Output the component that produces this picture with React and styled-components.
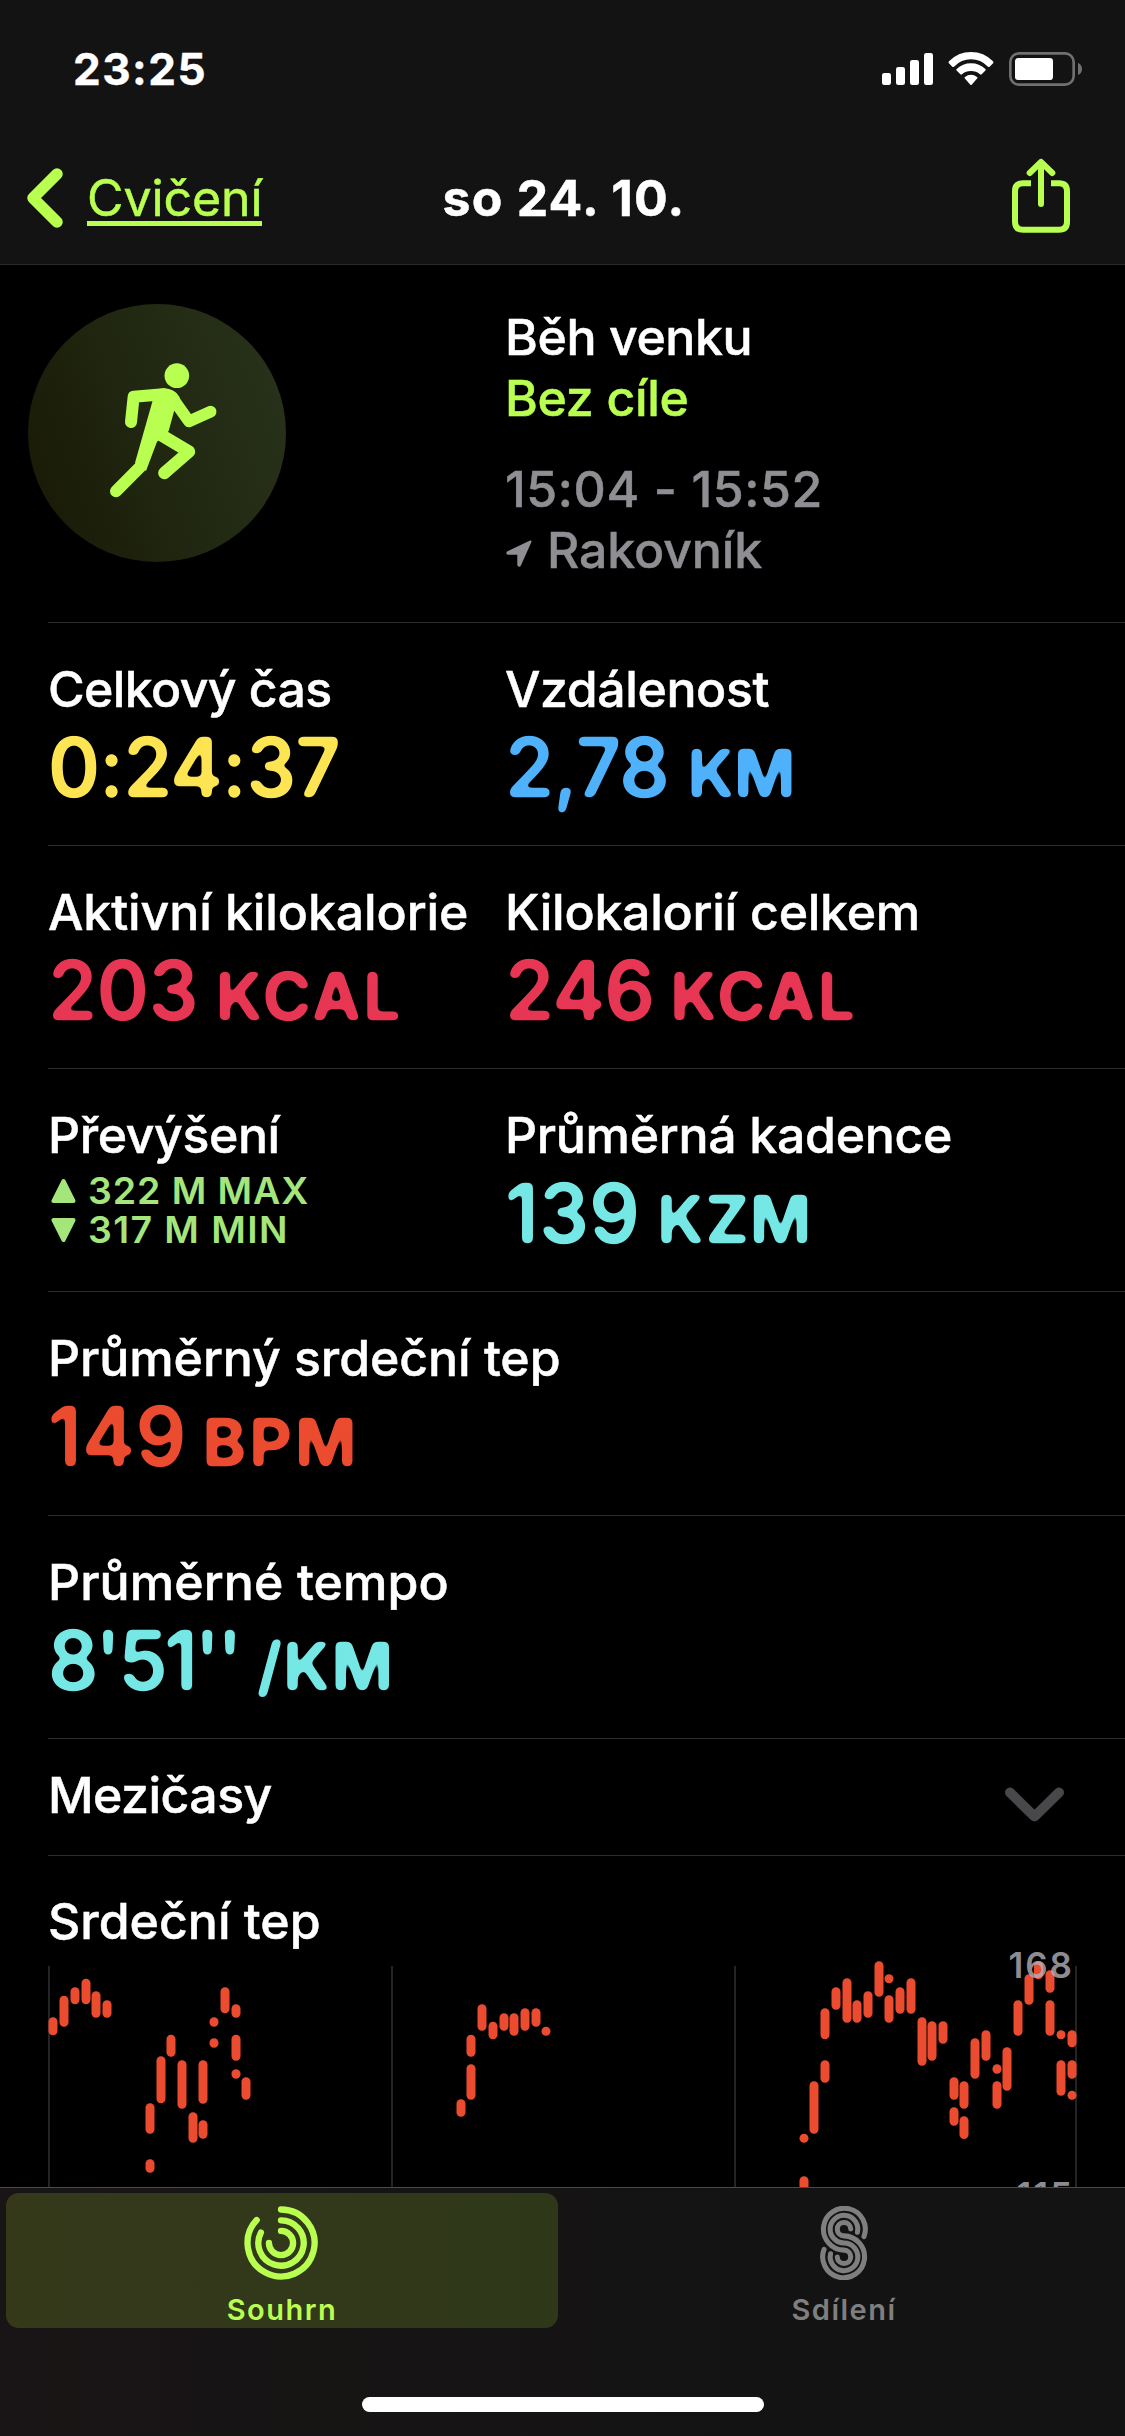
import React from "react";
import styled, { createGlobalStyle } from "styled-components";

const LIME = "#b9ff50";
const GRAY = "#8e8e93";
const RED = "#eb4b2f";

const GlobalStyle = createGlobalStyle`
  * { box-sizing: border-box; }
  body {
    margin: 0;
    background: #000;
    color: #fff;
    font-family: Inter, "Noto Sans", sans-serif;
  }
`;

const Screen = styled.div`
  width: 1125px;
  height: 2436px;
  display: flex;
  flex-direction: column;
  overflow: hidden;
  background: #000;
`;

const Header = styled.header`
  flex: none;
  height: 265px;
  background: #131313;
  border-bottom: 1px solid #2a2a2a;
`;

const StatusBar = styled.div`
  height: 132px;
  display: flex;
  justify-content: space-between;
  align-items: flex-start;
  padding: 44px 43px 0 73px;
`;

const Clock = styled.span`
  font-size: 44px;
  line-height: 50px;
  font-weight: 700;
  letter-spacing: 1.5px;
  -webkit-text-stroke: 0.4px currentColor;
`;

const StatusIcons = styled.div`
  display: flex;
  align-items: center;
  height: 50px;
  gap: 15px;
`;

const NavBar = styled.nav`
  height: 132px;
  display: grid;
  grid-template-columns: 1fr auto 1fr;
  align-items: start;
  padding: 23px 26px 0;
`;

const BackLink = styled.a`
  display: flex;
  align-items: flex-start;
  gap: 23px;
  color: ${LIME};
  font-size: 50px;
  font-weight: 400;
  letter-spacing: -0.1px;
  -webkit-text-stroke: 0.5px currentColor;

  svg { margin-top: 12px; }
`;

const BackText = styled.span`
  margin-top: 4px;
  height: 67px;
  line-height: 79px;
  border-bottom: 5px solid ${LIME};
`;

const NavTitle = styled.h1`
  margin: 0;
  padding-left: 3px;
  font-size: 50px;
  line-height: 86px;
  font-weight: 700;
  letter-spacing: 1.2px;
  -webkit-text-stroke: 0.5px currentColor;
`;

const ShareButton = styled.button`
  justify-self: end;
  border: 0;
  padding: 0;
  margin: 3px 29px 0 0;
  background: none;
  display: flex;
`;

const Content = styled.main`
  flex: 1;
  min-height: 0;
  overflow: hidden;
`;

const Summary = styled.section`
  height: 358px;
  display: grid;
  grid-template-columns: 457px 1fr;
  margin-left: 48px;
  border-bottom: 1px solid #2c2c2e;
`;

const WorkoutBadge = styled.div`
  width: 258px;
  height: 258px;
  margin: 39px 0 0 -20px;
  border-radius: 50%;
  background: linear-gradient(70deg, #1a1c08 12%, #222913 55%, #283119 92%);
`;

const WorkoutInfo = styled.div`
  padding-top: 42px;
  display: flex;
  flex-direction: column;
  font-size: 50px;
  line-height: 61px;
  font-weight: 500;
  -webkit-text-stroke: 0.5px currentColor;
`;

const InfoLine = styled.span`
  color: ${(p) => p.$color || "#fff"};
  -webkit-text-stroke-color: ${(p) => p.$color || "#fff"};
  letter-spacing: ${(p) => p.$track || 0}px;
  margin-top: ${(p) => p.$gap || 0}px;
  display: flex;

  svg { margin: 20px 15px 0 1px; }
`;

const Row = styled.section`
  height: ${(p) => p.$height || 223}px;
  display: grid;
  grid-template-columns: 457px 1fr;
  margin-left: 48px;
  padding-top: 36px;
  border-bottom: 1px solid #2c2c2e;
`;

const Cell = styled.div`
  display: flex;
  flex-direction: column;
  white-space: nowrap;
`;

const Label = styled.span`
  font-size: 50px;
  line-height: 60px;
  font-weight: 500;
  letter-spacing: ${(p) => p.$track || 0}px;
  -webkit-text-stroke: 0.5px currentColor;
`;

const Value = styled.div`
  margin-top: 6px;
  line-height: 84px;
  font-weight: 600;
  color: ${(p) => p.$color};
  filter: url(#rounded);
`;

const Amount = styled.span`
  display: inline-block;
  font-size: 83px;
  letter-spacing: ${(p) => p.$track || 0}px;
  transform: scaleX(0.95);
  transform-origin: left;
`;

const Unit = styled.span`
  font-size: 66px;
  line-height: 66px;
  font-weight: 700;
  letter-spacing: ${(p) => p.$track || 0}px;
  margin-left: ${(p) => p.$gap}px;
`;

const ElevationList = styled.div`
  padding: 6px 0 0 3px;
`;

const Elevation = styled.div`
  display: flex;
  align-items: center;
  gap: 12px;
  font-size: 37.5px;
  line-height: 39px;
  font-weight: 600;
  letter-spacing: ${(p) => p.$track}px;
  color: #a4e67c;
`;

const SplitsRow = styled.section`
  height: 117px;
  display: flex;
  justify-content: space-between;
  align-items: flex-start;
  margin-left: 48px;
  padding: 26px 60px 0 0;
  border-bottom: 1px solid #2c2c2e;

  svg { margin-top: 21px; }
`;

const HeartSection = styled.section`
  padding-top: 35px;
`;

const HeartTitle = styled.h2`
  margin: 0 0 0 48px;
  font-size: 50px;
  line-height: 60px;
  font-weight: 500;
  -webkit-text-stroke: 0.5px currentColor;
`;

const ChartSvg = styled.svg`
  display: block;
  margin-top: -2px;

  text {
    font: 600 35px Inter, sans-serif;
    letter-spacing: 2px;
    text-anchor: end;
  }
`;

const TabBar = styled.footer`
  flex: none;
  height: 249px;
  border-top: 1px solid #4b4a4b;
  background: linear-gradient(90deg, #191516 0, #161414 45%, #131313 65%);
  display: flex;
  flex-direction: column;
  align-items: center;
`;

const Tabs = styled.div`
  width: 1125px;
  display: grid;
  grid-template-columns: 552px 552px;
  gap: 10px;
  padding: 5px 6px 0;
`;

const Tab = styled.div`
  height: 135px;
  padding-top: 13px;
  display: flex;
  flex-direction: column;
  align-items: center;
  border-radius: 13px;
  background: ${(p) => (p.$active ? "linear-gradient(90deg, #35391a, #32381a 60%, #2e3818)" : "none")};
  color: ${(p) => (p.$active ? LIME : "#7f7f7f")};
  font-size: 29px;
  line-height: 36px;
  font-weight: 600;
  letter-spacing: 1.5px;

  svg { margin-bottom: 12px; }
`;

const HomeIndicator = styled.div`
  width: 402px;
  height: 15px;
  margin-top: 69px;
  border-radius: 8px;
  background: #fff;
`;

const FilterDefs = styled.svg`
  display: block;
  width: 0;
  height: 0;
`;

const RoundedFilter = () => (
  <FilterDefs aria-hidden="true">
    <filter id="rounded" x="-2%" y="-10%" width="104%" height="120%" colorInterpolationFilters="sRGB">
      <feGaussianBlur stdDeviation="2.4" />
      <feComponentTransfer>
        <feFuncA type="linear" slope="7" intercept="-2.7" />
      </feComponentTransfer>
    </filter>
  </FilterDefs>
);

const SignalIcon = () => (
  <svg width="51" height="34" viewBox="36 36 153 102" fill="#fff">
    <rect x="36" y="99" width="27" height="36" rx="7" />
    <rect x="78" y="81" width="27" height="54" rx="7" />
    <rect x="120" y="60" width="27" height="75" rx="7" />
    <rect x="162" y="39" width="27" height="96" rx="7" />
  </svg>
);

const WifiIcon = () => (
  <svg width="46" height="34" viewBox="234 36 138 102" fill="#fff">
    <path d="M236 69Q235 66 237 64Q264 36 303 36T369 64Q371 66 370 69L359 80Q357 82 354 80Q332 58 303 58T252 80Q249 82 247 80Z" />
    <path d="M259 91Q258 89 260 87Q278 70 303 70T346 87Q348 89 347 91L335 103Q333 105 330 103Q319 93 303 93T276 103Q273 105 271 103Z" />
    <path d="M284 115Q282 113 285 111Q293 104 303 104T321 111Q324 113 322 115L305 134Q303 136 301 134Z" />
  </svg>
);

const BatteryIcon = () => (
  <svg width="73" height="34" viewBox="417 36 219 102">
    <rect x="421" y="40" width="190" height="94" rx="26" fill="none" stroke="#707070" strokeWidth="8" />
    <rect x="435" y="54" width="114" height="66" rx="10" fill="#fff" />
    <path d="M624 68Q636 74 636 87T624 105Z" fill="#707070" />
  </svg>
);

const BackIcon = () => (
  <svg width="38" height="62" viewBox="0 0 38 62" fill="none" stroke={LIME} strokeWidth="11.5" strokeLinecap="round" strokeLinejoin="round">
    <path d="M31 7L7 31L31 55" />
  </svg>
);

const ShareIcon = () => (
  <svg width="58" height="75" viewBox="426 352 174 225" fill="none" stroke={LIME} strokeWidth="18">
    <path d="M483 428H459Q435 428 435 452V543Q435 567 459 567H567Q591 567 591 543V452Q591 428 567 428H543" />
    <path d="M513 490V366M479 397L513 364L547 397" strokeLinecap="round" strokeLinejoin="round" />
  </svg>
);

const RunnerIcon = () => (
  <svg width="258" height="258" viewBox="24 24 774 774" fill={LIME} stroke={LIME} strokeLinecap="round" strokeLinejoin="round">
    <circle cx="470.5" cy="239" r="37" stroke="none" />
    <path d="M333 378L341 302L430 295" fill="none" strokeWidth="36" />
    <path d="M455 303L507 376L572 347" fill="none" strokeWidth="35" />
    <path d="M397 317L400 281L434 277Q462 278 478 302L486 340L463 343L446 405L411 437L378 525L345 500Z" stroke="none" />
    <path d="M361 512L288 586" fill="none" strokeWidth="36" />
    <path d="M425 418L507 467L433 531" fill="none" strokeWidth="37" />
  </svg>
);

const LocationIcon = () => (
  <svg width="26" height="27" viewBox="0 0 26 27" fill={GRAY} stroke={GRAY} strokeWidth="2" strokeLinejoin="round">
    <path d="M24.5 1.5L1.5 12.3Q1 13.5 2 13.7H12.3V25Q13.3 26.5 14 25Z" />
  </svg>
);

const TriangleIcon = ({ down }) => (
  <svg width="25" height="26" viewBox="0 0 25 26" fill="#a4e67c" stroke="#a4e67c" strokeWidth="4" strokeLinejoin="round">
    <path d={down ? "M2.5 3H22.5L12.5 23Z" : "M2.5 23H22.5L12.5 3Z"} />
  </svg>
);

const ChevronDownIcon = () => (
  <svg width="61" height="38" viewBox="0 0 61 38" fill="none" stroke="#48484a" strokeWidth="10" strokeLinecap="round" strokeLinejoin="round">
    <path d="M6 6.5L30.5 30.5L55 6.5" />
  </svg>
);

const RingsIcon = () => (
  <svg width="76" height="76" viewBox="-37 -38 76 76" fill="none" stroke={LIME} strokeWidth="6.5" strokeLinecap="round">
    <path d="M0 -34.4A34.4 34.4 0 1 1 -25 -23.6" />
    <path d="M0 -23.3A23.3 23.3 0 1 1 -20.7 -10.7" />
    <path d="M0 -12.4A12.4 12.4 0 1 1 -12.4 0" />
  </svg>
);

const SharingIcon = () => (
  <svg width="50" height="76" viewBox="-25 -38 50 76" fill="none" stroke="currentColor" strokeWidth="5.2" strokeLinecap="round">
    <path d="M20.5 -6.6A21.5 21.5 0 1 0 0 7.3A6.9 6.9 0 1 1 -6.9 14.5" />
    <path d="M13.8 -11A14.2 14.2 0 1 0 0 0A14.2 14.2 0 1 1 -13.8 11" />
    <path d="M6.9 -14.5A6.9 6.9 0 1 0 0 -7.3A21.5 21.5 0 1 1 -20.5 6.6" />
  </svg>
);

// Heart-rate samples: [x centre, top, bottom]
const BEATS = [
  [53, 87.3, 105.3], [64, 65.7, 96.7], [75, 57.3, 74.3], [86, 48.7, 74.3], [96, 61.3, 87.7], [107, 70.3, 87.7],
  [150, 173.3, 203.7], [150, 229.3, 242.7], [161, 126.3, 173.3], [171, 104.7, 126.7], [182, 130.3, 178.7],
  [193, 182.3, 212.7], [203, 130.3, 173.7], [203, 190.3, 208.7], [214, 87.3, 96.7], [214, 108.3, 117.7],
  [225, 57.3, 83.3], [236, 74.3, 87.7], [236, 104.7, 130.7], [236, 139.3, 148.7], [246, 147.3, 169.7],
  [461, 169.3, 186.7], [471, 104.7, 126.7], [471, 134.3, 169.7], [482, 74.3, 100.7], [493, 91.7, 109.3],
  [504, 83.3, 100.7], [514, 83.3, 105.7], [525, 78.3, 100.7], [536, 78.3, 96.7], [546, 96.7, 105.7],
  [804, 203.7, 212.7], [804, 246.3, 276], [814, 151.3, 203.7], [825, 78.3, 109.3], [825, 130.3, 152.7],
  [836, 57.3, 79.7], [847, 48.3, 92.7], [857, 70.3, 92.7], [868, 61.3, 87.7], [879, 31.3, 66.7],
  [889, 44.3, 53.3], [889, 65.3, 92.7], [900, 57.3, 83.7], [911, 48.3, 83.7], [922, 87.3, 135.7],
  [932, 91.3, 130.7], [943, 91.3, 113.7], [954, 147.3, 169.7], [954, 177.3, 195.7], [964, 151.3, 178.7],
  [964, 186.3, 209], [975, 108.3, 148.7], [986, 100.3, 130.7], [997, 134.3, 143.7], [997, 151.3, 178.7],
  [1007, 117.3, 160.7], [1018, 70.3, 105.7], [1029, 44.3, 74.7], [1038.5, 31.3, 49.3], [1050, 40.3, 62.7],
  [1050, 70.3, 105.7], [1061, 100.3, 109.3], [1061, 130.3, 165.7], [1072, 100.3, 117.3], [1072, 130.3, 148.7],
  [1072, 160.7, 169.7],
];

const HeartChart = () => (
  <ChartSvg width="1125" height="240" viewBox="0 19 1125 240">
    {[49, 392, 735, 1076].map((x) => (
      <rect key={x} x={x - 0.75} y="36" width="1.5" height="240" fill="#303032" />
    ))}
    {BEATS.map(([x, top, bottom], i) => (
      <rect key={i} x={x - 4.5} y={top} width="9" height={bottom - top} rx="4.5" fill={RED} />
    ))}
    <text x="1074" y="48" fill="#b4b4ba" fillOpacity="0.8">168</text>
    <text x="1074" y="278" fill="#b4b4ba" fillOpacity="0.8">115</text>
  </ChartSvg>
);

const Metric = ({ label, track, amount, amountTrack, unit, unitTrack, gap = 7, color }) => (
  <Cell>
    <Label $track={track}>{label}</Label>
    <Value $color={color}>
      <Amount $track={amountTrack}>{amount}</Amount>
      {unit && <Unit $track={unitTrack} $gap={gap}>{unit}</Unit>}
    </Value>
  </Cell>
);

export default function App() {
  return (
    <Screen>
      <GlobalStyle />
      <Header>
        <StatusBar>
          <Clock>23:25</Clock>
          <StatusIcons>
            <SignalIcon />
            <WifiIcon />
            <BatteryIcon />
          </StatusIcons>
        </StatusBar>
        <NavBar>
          <BackLink>
            <BackIcon />
            <BackText>Cvičení</BackText>
          </BackLink>
          <NavTitle>so 24. 10.</NavTitle>
          <ShareButton aria-label="Sdílet">
            <ShareIcon />
          </ShareButton>
        </NavBar>
      </Header>

      <Content>
        <Summary>
          <WorkoutBadge>
            <RunnerIcon />
          </WorkoutBadge>
          <WorkoutInfo>
            <InfoLine $track={-0.4}>Běh venku</InfoLine>
            <InfoLine $track={-0.3} $color={LIME}>Bez cíle</InfoLine>
            <InfoLine $track={0.6} $color={GRAY} $gap={30}>15:04 - 15:52</InfoLine>
            <InfoLine $track={-0.1} $color={GRAY}>
              <LocationIcon />
              Rakovník
            </InfoLine>
          </WorkoutInfo>
        </Summary>

        <Row>
          <Metric label="Celkový čas" track={-0.6} amount="0:24:37" amountTrack={-1} color="#fde452" />
          <Metric label="Vzdálenost" track={-0.4} amount="2,78" amountTrack={-0.9} unit="KM" unitTrack={-1} gap={10} color="#4fb1fb" />
        </Row>
        <Row>
          <Metric label="Aktivní kilokalorie" track={-0.1} amount="203" amountTrack={-0.5} unit="KCAL" unitTrack={2.1} gap={10} color="#e73653" />
          <Metric label="Kilokalorií celkem" track={-0.25} amount="246" amountTrack={-0.5} unit="KCAL" unitTrack={2.1} gap={8} color="#e73653" />
        </Row>
        <Row>
          <Cell>
            <Label $track={-0.4}>Převýšení</Label>
            <ElevationList>
              <Elevation $track={0.9}>
                <TriangleIcon />
                322 M MAX
              </Elevation>
              <Elevation $track={1.4}>
                <TriangleIcon down />
                317 M MIN
              </Elevation>
            </ElevationList>
          </Cell>
          <Metric label="Průměrná kadence" track={-0.3} amount="139" amountTrack={0.4} unit="KZM" unitTrack={0.6} gap={10} color="#75e7e5" />
        </Row>
        <Row $height={224}>
          <Metric label="Průměrný srdeční tep" track={-0.07} amount="149" amountTrack={1} unit="BPM" unitTrack={3} gap={8} color={RED} />
        </Row>
        <Row>
          <Metric label="Průměrné tempo" track={0.1} amount="8'51''" amountTrack={-3.3} unit="/KM" unitTrack={0.8} gap={7} color="#75e7e5" />
        </Row>
        <SplitsRow>
          <Label $track={-0.55}>Mezičasy</Label>
          <ChevronDownIcon />
        </SplitsRow>
        <HeartSection>
          <HeartTitle>Srdeční tep</HeartTitle>
          <HeartChart />
        </HeartSection>
      </Content>

      <TabBar>
        <Tabs>
          <Tab $active>
            <RingsIcon />
            Souhrn
          </Tab>
          <Tab>
            <SharingIcon />
            Sdílení
          </Tab>
        </Tabs>
        <HomeIndicator />
      </TabBar>
      <RoundedFilter />
    </Screen>
  );
}
